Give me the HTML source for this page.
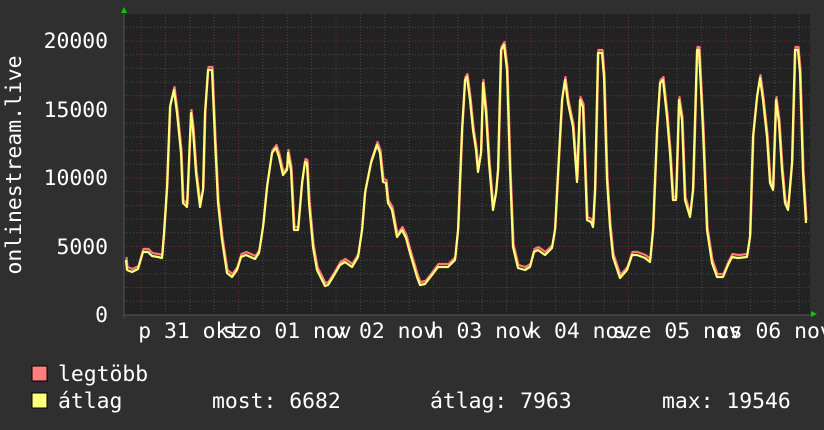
<!DOCTYPE html>
<html><head><meta charset="utf-8"><style>
html,body{margin:0;padding:0;background:#2f2f2f;width:824px;height:430px;overflow:hidden}
text{font-family:"DejaVu Sans Mono","Liberation Mono",monospace;font-size:21.4px;fill:#fff}
</style></head><body>
<svg width="824" height="430" viewBox="0 0 824 430" xmlns="http://www.w3.org/2000/svg">
<rect x="0" y="0" width="824" height="430" fill="#2f2f2f"/>
<rect x="124" y="14" width="686" height="301" fill="#222"/>
<g stroke="#4a4a4a" stroke-width="1" stroke-dasharray="1,2">
<path d="M124 301.3H810M124 287.6H810M124 273.9H810M124 260.2H810M124 232.8H810M124 219.1H810M124 205.4H810M124 191.7H810M124 164.3H810M124 150.6H810M124 136.9H810M124 123.2H810M124 95.8H810M124 82.1H810M124 68.4H810M124 54.7H810M124 27.3H810"/>
<path d="M165.4 14V315M189.8 14V315M214.1 14V315M262.9 14V315M287.3 14V315M311.6 14V315M360.4 14V315M384.8 14V315M409.1 14V315M457.9 14V315M482.3 14V315M506.6 14V315M555.4 14V315M579.8 14V315M604.1 14V315M652.9 14V315M677.3 14V315M701.6 14V315M750.4 14V315M774.8 14V315M799.1 14V315"/>
</g>
<g stroke="#6a2e2e" stroke-width="1" stroke-dasharray="1,2">
<path d="M124 246.5H810M124 178H810M124 109.5H810M124 41H810"/>
<path d="M141 14V315M238.5 14V315M336 14V315M433.5 14V315M531 14V315M628.5 14V315M726 14V315"/>
</g>
<g fill="none" stroke-width="2.2" stroke-linejoin="round">
<polyline transform="translate(0.5,-3)" stroke="#ff7777" points="126,260 127,270 132,272 138,269 143,252 148,252 152,256 158,257 162,258 164,233 167,187 170,107 174,90 177,113 181,153 183,203 187,207 189,160 191,113 193,130 196,173 200,207 203,190 205,113 208,70 212,70 215,140 218,203 222,240 227,273 232,277 237,270 241,257 246,255 255,259 259,253 263,227 267,187 272,153 276,148 279,157 283,175 287,170 288,153 291,170 294,230 298,230 302,183 305,162 307,163 309,203 313,247 317,270 322,280 325,286 328,285 333,277 340,265 345,262 352,267 358,257 362,230 365,193 371,163 377,145 380,153 383,182 386,183 388,203 392,210 397,237 402,230 406,238 410,253 417,277 420,285 425,284 432,275 438,267 448,267 455,260 458,230 462,130 465,80 467,77 470,100 473,130 476,150 478,172 481,153 483,83 486,113 489,163 493,210 496,193 498,170 501,50 504,45 507,70 510,170 513,247 518,268 525,270 530,267 534,252 538,250 545,255 552,248 555,230 558,173 562,100 565,80 568,103 573,127 577,182 580,100 583,107 587,220 591,222 593,227 595,190 598,53 602,53 604,77 607,180 610,227 613,257 620,278 627,270 632,255 637,255 645,258 650,262 653,230 657,130 660,83 663,80 667,117 670,153 673,200 676,200 679,100 682,120 685,200 690,217 693,190 697,50 699,50 703,130 707,230 712,263 717,277 723,277 728,265 732,257 738,258 747,257 750,237 753,137 757,97 760,78 763,100 767,137 770,183 773,190 776,100 779,123 782,170 785,203 788,210 792,163 795,50 798,50 800,73 803,173 806,223"/>
<polyline stroke="#ffff77" points="126,260 127,270 132,272 138,269 143,252 148,252 152,256 158,257 162,258 164,233 167,187 170,107 174,90 177,113 181,153 183,203 187,207 189,160 191,113 193,130 196,173 200,207 203,190 205,113 208,70 212,70 215,140 218,203 222,240 227,273 232,277 237,270 241,257 246,255 255,259 259,253 263,227 267,187 272,153 276,148 279,157 283,175 287,170 288,153 291,170 294,230 298,230 302,183 305,162 307,163 309,203 313,247 317,270 322,280 325,286 328,285 333,277 340,265 345,262 352,267 358,257 362,230 365,193 371,163 377,145 380,153 383,182 386,183 388,203 392,210 397,237 402,230 406,238 410,253 417,277 420,285 425,284 432,275 438,267 448,267 455,260 458,230 462,130 465,80 467,77 470,100 473,130 476,150 478,172 481,153 483,83 486,113 489,163 493,210 496,193 498,170 501,50 504,45 507,70 510,170 513,247 518,268 525,270 530,267 534,252 538,250 545,255 552,248 555,230 558,173 562,100 565,80 568,103 573,127 577,182 580,100 583,107 587,220 591,222 593,227 595,190 598,53 602,53 604,77 607,180 610,227 613,257 620,278 627,270 632,255 637,255 645,258 650,262 653,230 657,130 660,83 663,80 667,117 670,153 673,200 676,200 679,100 682,120 685,200 690,217 693,190 697,50 699,50 703,130 707,230 712,263 717,277 723,277 728,265 732,257 738,258 747,257 750,237 753,137 757,97 760,78 763,100 767,137 770,183 773,190 776,100 779,123 782,170 785,203 788,210 792,163 795,50 798,50 800,73 803,173 806,223"/>
</g>
<path d="M124 315H812M124 14V318" stroke="#555" stroke-width="1"/>
<polygon points="121,13 127,13 124,7" fill="#0c0"/>
<polygon points="811,311 811,317 817,314" fill="#0c0"/>
<g text-anchor="end">
<text x="108" y="48">20000</text>
<text x="108" y="117">15000</text>
<text x="108" y="185">10000</text>
<text x="108" y="254">5000</text>
<text x="108" y="322">0</text>
</g>
<text transform="translate(21,165) rotate(-90)" text-anchor="middle">onlinestream.live</text>
<g text-anchor="middle">
<text x="189.8" y="338">p 31 okt</text>
<text x="287.3" y="338">szo 01 nov</text>
<text x="384.8" y="338">v 02 nov</text>
<text x="482.3" y="338">h 03 nov</text>
<text x="579.8" y="338">k 04 nov</text>
<text x="677.3" y="338">sze 05 nov</text>
<text x="774.8" y="338">cs 06 nov</text>
</g>
<rect x="32" y="366" width="15" height="15" fill="#ff7f7f" stroke="#000"/>
<rect x="32" y="393" width="15" height="15" fill="#ffff7f" stroke="#000"/>
<text x="58" y="381">legtöbb</text>
<text x="58" y="408">átlag</text>
<text x="212" y="408">most: 6682</text>
<text x="430" y="408">átlag: 7963</text>
<text x="662" y="408">max: 19546</text>
</svg>
</body></html>
